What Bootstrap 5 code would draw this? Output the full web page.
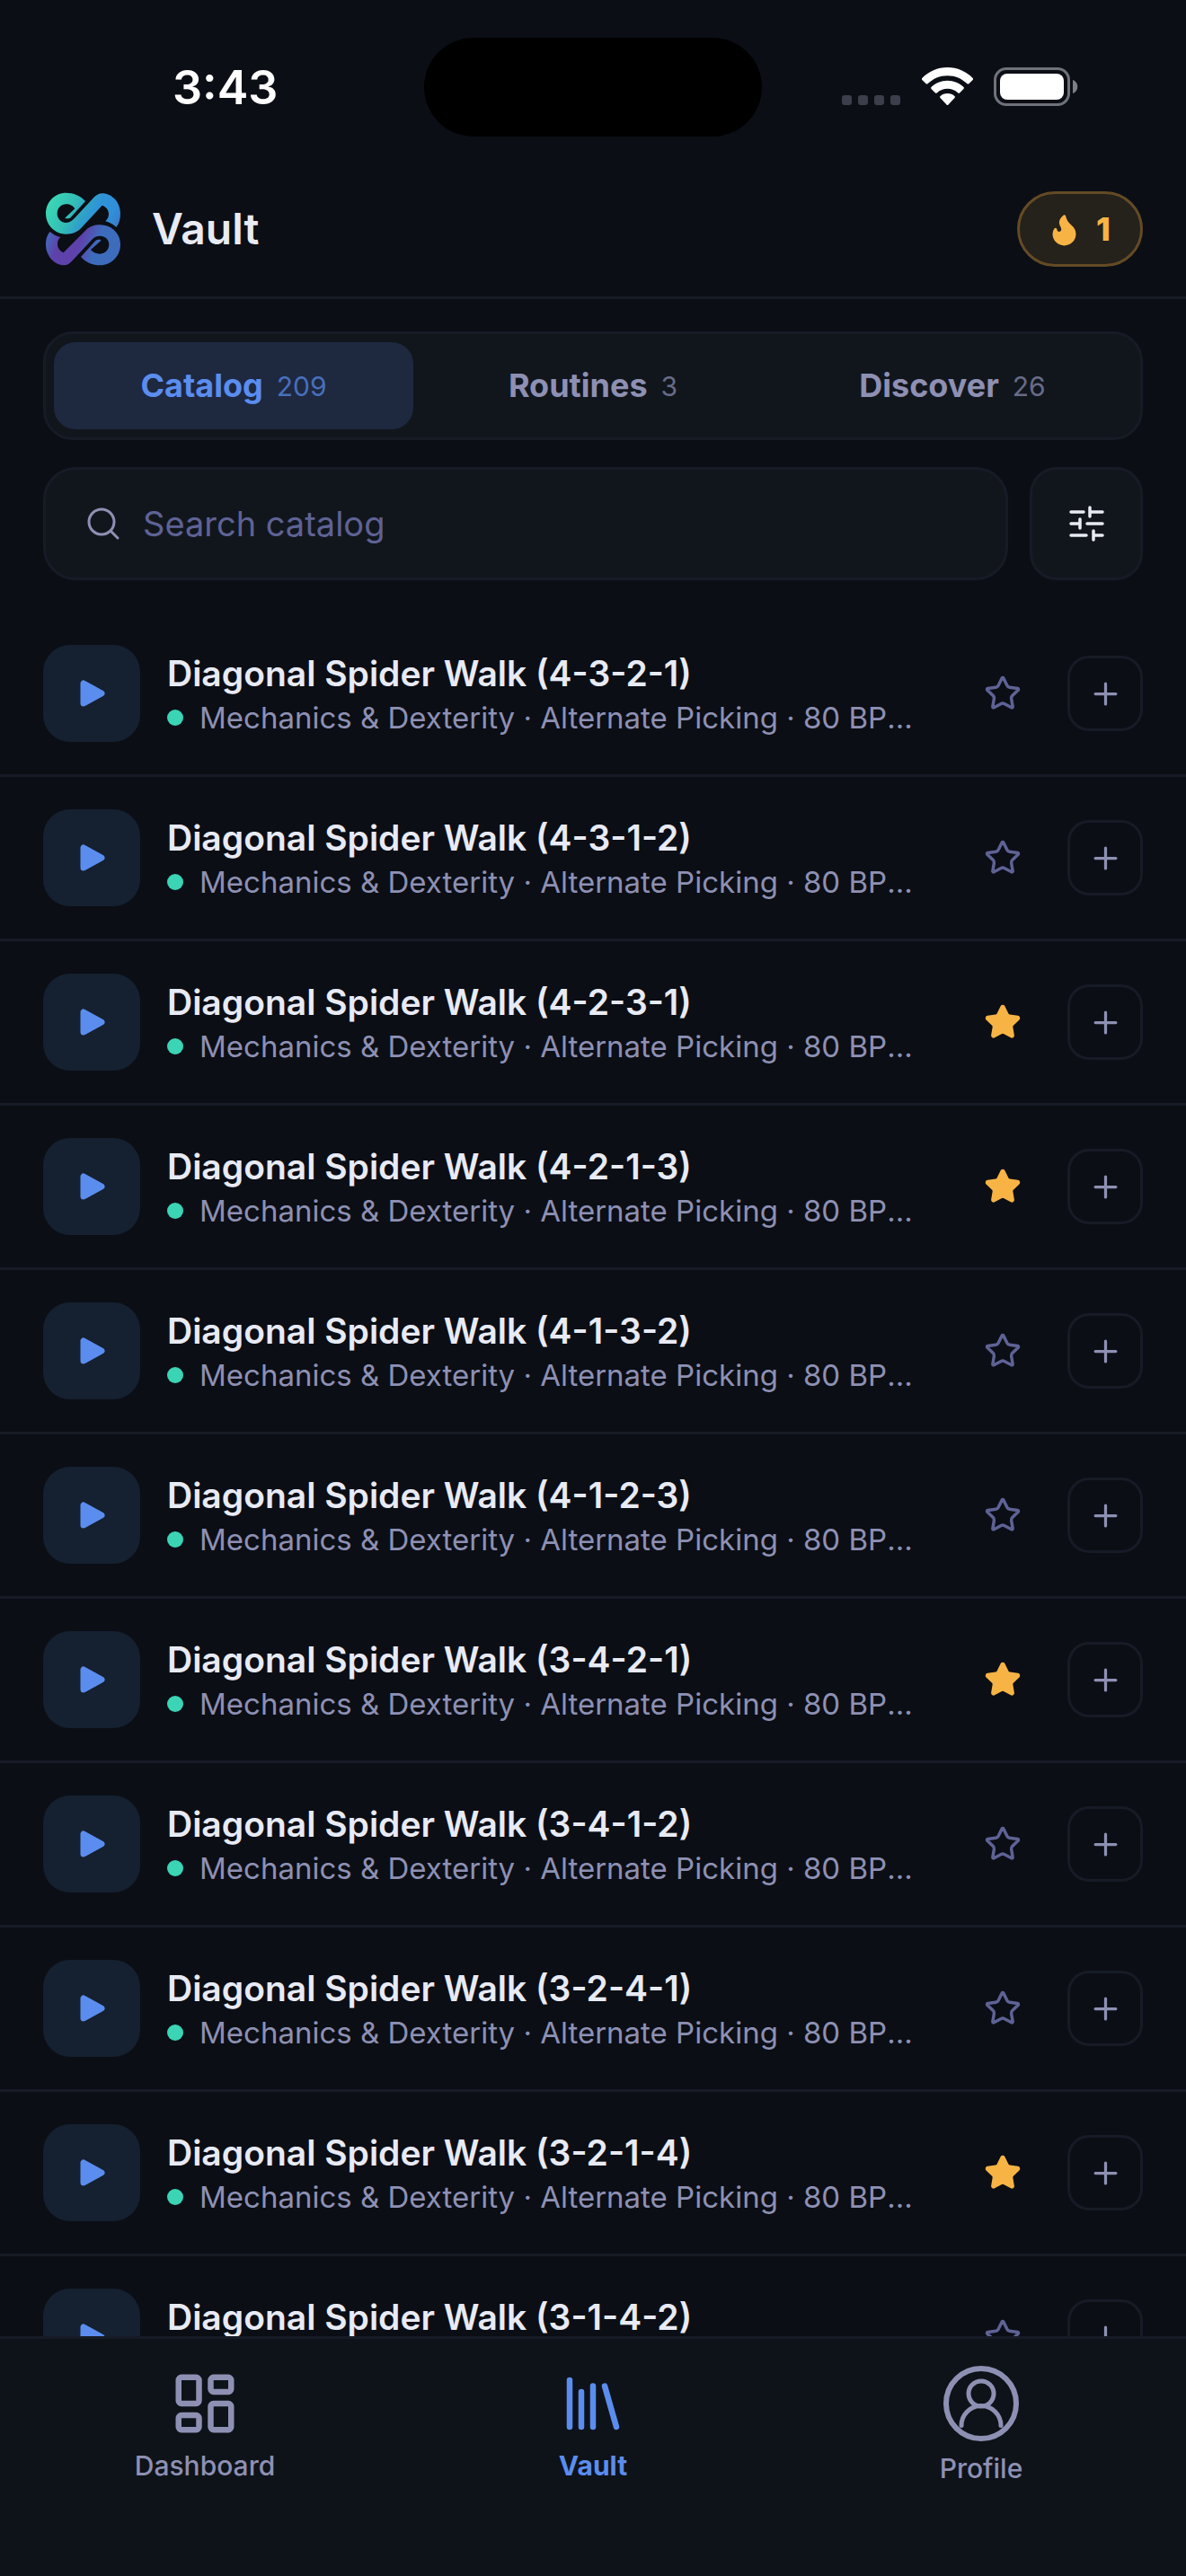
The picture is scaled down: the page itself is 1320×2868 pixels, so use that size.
<!DOCTYPE html>
<html lang="en">
<head>
<meta charset="utf-8">
<meta name="viewport" content="width=device-width, initial-scale=1">
<title>Vault</title>
<link href="https://cdn.jsdelivr.net/npm/bootstrap@5.3.0/dist/css/bootstrap.min.css" rel="stylesheet">
<style>
  :root { --ink:#e8eaf4; --muted:#8e90b3; --dim:#5f6294; --line:#171b26; --panel:#11161d; --accent:#5b8def; --gold:#f7b445; --mint:#3bd4b4; }
  body { background:#0b0e15; color:var(--ink); font-family:Inter,"Liberation Sans",sans-serif; line-height:1.2; }
  svg { display:block; flex:none; }
  .stroke-icon { fill:none; stroke:currentColor; stroke-linecap:round; stroke-linejoin:round; }
  .status-bar { height:180px; padding:0 120px 0 192px; }
  .clock { font-size:52px; font-weight:600; line-height:60px; color:#fff; margin-top:68px; }
  .island { width:376px; height:110px; border-radius:55px; background:#000; top:42px; left:50%; transform:translateX(-50%); }
  .status-icons { margin-top:75px; gap:23px; }
  .app-header { padding:33px 48px; border-bottom:3px solid var(--line); }
  .app-title { font-size:48px; font-weight:600; line-height:60px; }
  .streak { height:84px; padding:0 33px 0 30px; gap:16px; border:3px solid #644b25; border-radius:42px; background:#25211b; color:var(--gold); font-size:36px; font-weight:800; }
  .streak:hover { background:#2f2a20; color:var(--gold); }
  .tools { padding:36px 48px; gap:30px; }
  .segments { padding:9px; border:3px solid var(--line); border-radius:33px; background:var(--panel); }
  .segments .nav-link { height:97px; padding:0; gap:15px; border-radius:24px; color:var(--muted); font-size:36px; font-weight:700; }
  .segments .nav-link.active { background:#1e283f; color:var(--accent); }
  .segments .tally { font-size:30px; font-weight:400; opacity:.7; }
  .search-box { height:126px; padding:0 45px; gap:24px; border:3px solid var(--line); border-radius:36px; background:var(--panel); color:var(--muted); }
  .search-box input { font-size:38px; line-height:48px; color:var(--ink); }
  .search-box input::placeholder { color:var(--dim); opacity:1; }
  .filter-btn { width:126px; height:126px; border:3px solid var(--line); border-radius:30px; background:var(--panel); color:var(--ink); }
  .catalog { overflow-y:auto; min-height:0; scrollbar-width:none; }
  .catalog::-webkit-scrollbar { display:none; }
  .exercise { padding:36px 48px; border-bottom:3px solid var(--line); gap:30px; }
  .play-btn { width:108px; height:108px; border-radius:30px; background:#152030; color:var(--accent); }
  .exercise-text { padding-top:6px; }
  .exercise-name { font-size:39px; font-weight:600; line-height:48px; }
  .exercise-meta { gap:18px; font-size:33px; line-height:50px; color:var(--muted); }
  .level-dot { width:18px; height:18px; border-radius:50%; background:var(--mint); flex:none; }
  .star-btn { width:84px; height:84px; color:var(--dim); }
  .star-btn[aria-pressed="true"] { color:var(--gold); }
  .star-btn[aria-pressed="true"] svg { fill:currentColor; }
  .add-btn { width:84px; height:84px; border:3px solid var(--line); border-radius:24px; color:var(--muted); }
  .tab-bar { height:267px; padding:30px 12px 0; border-top:3px solid var(--line); background:#0e1319; }
  .tab-bar a { gap:12px; color:var(--muted); font-size:30px; font-weight:500; line-height:36px; text-decoration:none; }
  .tab-bar a.active { color:var(--accent); font-weight:700; }
  .tab-bar .short-icon { margin-top:3px; }
</style>
</head>
<body>
<svg width="0" height="0" class="position-absolute" aria-hidden="true">
  <symbol id="play" viewBox="0 0 42 42"><path d="M12 10v22l20-11z" fill="currentColor" stroke="currentColor" stroke-width="7" stroke-linejoin="round"/></symbol>
  <symbol id="star" viewBox="0 0 24 24"><path d="M11.525 2.295a.53.53 0 0 1 .95 0l2.31 4.679a2.123 2.123 0 0 0 1.595 1.16l5.166.756a.53.53 0 0 1 .294.904l-3.736 3.638a2.123 2.123 0 0 0-.611 1.878l.882 5.14a.53.53 0 0 1-.771.56l-4.618-2.428a2.122 2.122 0 0 0-1.973 0L6.396 21.01a.53.53 0 0 1-.77-.56l.881-5.139a2.122 2.122 0 0 0-.611-1.879L2.16 9.795a.53.53 0 0 1 .294-.906l5.165-.755a2.122 2.122 0 0 0 1.597-1.16z"/></symbol>
  <symbol id="plus" viewBox="0 0 24 24"><path d="M5 12h14M12 5v14"/></symbol>
</svg>
<div class="d-flex flex-column vh-100">
  <div class="status-bar position-relative d-flex justify-content-between align-items-start flex-shrink-0">
    <span class="clock">3:43</span>
    <div class="island position-absolute"></div>
    <div class="status-icons d-flex">
      <svg width="66" height="43" viewBox="0 0 66 43" fill="#3d3e4c"><rect y="31" width="11" height="11" rx="3"/><rect x="18" y="31" width="11" height="11" rx="3"/><rect x="36" y="31" width="11" height="11" rx="3"/><rect x="54" y="31" width="11" height="11" rx="3"/></svg>
      <svg width="57" height="43" viewBox="0 0 57 43" fill="#fff"><path d="M28.500 0C39.500 0 49.500 4.500 56.700 12Q57.500 13 56.700 14L52.300 18.300Q51.300 19 50.300 18.100C44.500 12.500 37 9.200 28.500 9.200S12.500 12.500 6.700 18.100Q5.700 19 4.700 18.300L.3 14Q-.5 13 .3 12C7.500 4.500 17.500 0 28.500 0Z"/><path d="M28.500 14.700C35.500 14.700 42 17.500 46.600 22.100Q47.300 23 46.500 24L42 28.500Q41 29.200 40 28.300C37 25.400 33 23.800 28.500 23.800S20 25.400 17 28.300Q16 29.200 15 28.500L10.500 24Q9.700 23 10.400 22.100C15 17.500 21.500 14.700 28.500 14.700Z"/><path d="M28.500 29C31.700 29 34.500 30.200 36.600 32.200Q37.400 33 36.500 34L29.500 41.500Q28.500 42.500 27.500 41.500L20.500 34Q19.600 33 20.400 32.200C22.500 30.200 25.300 29 28.500 29Z"/></svg>
      <svg width="94" height="43" viewBox="0 0 94 43"><rect x="1.500" y="1.500" width="82" height="40" rx="12.500" fill="none" stroke="#70727b" stroke-width="3"/><rect x="7" y="7" width="71" height="29" rx="8" fill="#fff"/><path d="M88 14c7 2 7 13 0 15z" fill="#7c7e88"/></svg>
    </div>
  </div>

  <header class="app-header d-flex align-items-center justify-content-between flex-shrink-0">
    <div class="d-flex align-items-center">
      <svg class="me-4" width="97" height="84" viewBox="24 37 291 252" role="img" aria-label="Logo">
        <defs>
          <linearGradient id="upper" gradientUnits="userSpaceOnUse" x1="60" y1="50" x2="275" y2="150"><stop offset="0" stop-color="#3bd6b5"/><stop offset=".3" stop-color="#33bdb6"/><stop offset=".5" stop-color="#2fa0c9"/><stop offset=".65" stop-color="#2f92d9"/><stop offset=".85" stop-color="#308fd8"/><stop offset="1" stop-color="#3a7bcb"/></linearGradient>
          <linearGradient id="lower" gradientUnits="userSpaceOnUse" x1="40" y1="190" x2="265" y2="270"><stop offset="0" stop-color="#4764bb"/><stop offset=".17" stop-color="#5e41aa"/><stop offset=".45" stop-color="#5e42ab"/><stop offset=".68" stop-color="#3d6cbd"/><stop offset="1" stop-color="#3d6cbd"/></linearGradient>
        </defs>
        <path fill="url(#upper)" d="M165 70C150 52 125 42 101 42C62 42 33 73 33 111C33 149 63 180 101 180C122 180 138 173 150 161L221 84C234 88 243 99 243 113C243 123 239 131 232 137C245 140 257 147 268 157C277 146 282 131 282 111C282 72 252 44 222 44C210 44 202 49 195 56L128 128C121 136 112 142 101 142C84 142 71 128 71 111C71 94 84 80 101 80C114 80 125 86 130 95L99 124C96 127 98 128 102 128H108Q113 128 117 123Z"/>
        <path fill="url(#lower)" d="M150 256C165 274 190 284 214 284C253 284 282 253 282 215C282 177 252 149 214 149C193 149 178 155 165 168L92 242C80 236 72 226 72 213C72 203 76 196 82 190C70 188 58 182 47 172C38 182 33 195 33 215C33 254 63 284 93 284C105 284 113 278 120 270L187 198C194 190 203 186 214 186C231 186 244 198 244 215C244 232 231 246 214 246C201 246 190 241 183 232L216 203C218 200 217 198 213 198H207Q202 198 198 203Z"/>
      </svg>
      <h1 class="app-title mb-0">Vault</h1>
    </div>
    <button type="button" class="streak btn d-flex align-items-center" aria-label="Streak: 1 day">
      <svg width="39" height="39" viewBox="0 0 24 24" fill="currentColor" stroke="currentColor" stroke-width="2" stroke-linejoin="round"><path d="M8.500 14.500A2.500 2.500 0 0 0 11 12c0-1.380-.5-2-1-3-1.072-2.143-.224-4.054 2-6 .5 2.500 2 4.900 4 6.500 2 1.600 3 3.500 3 5.500a7 7 0 1 1-14 0c0-1.153.433-2.294 1-3a2.500 2.500 0 0 0 2.500 2.500z"/></svg>
      <span>1</span>
    </button>
  </header>

  <section class="tools d-flex flex-column flex-shrink-0">
    <ul class="segments nav nav-pills nav-fill flex-nowrap" role="tablist">
      <li class="nav-item w-100" role="presentation"><button type="button" role="tab" aria-selected="true" class="nav-link active w-100 d-flex align-items-center justify-content-center">Catalog <span class="tally">209</span></button></li>
      <li class="nav-item w-100" role="presentation"><button type="button" role="tab" aria-selected="false" class="nav-link w-100 d-flex align-items-center justify-content-center">Routines <span class="tally">3</span></button></li>
      <li class="nav-item w-100" role="presentation"><button type="button" role="tab" aria-selected="false" class="nav-link w-100 d-flex align-items-center justify-content-center">Discover <span class="tally">26</span></button></li>
    </ul>
    <div class="d-flex gap-4">
      <label class="search-box d-flex align-items-center flex-grow-1" for="search">
        <svg class="stroke-icon" width="39" height="39" viewBox="0 0 39 39" stroke-width="3"><circle cx="17" cy="17" r="14"/><path d="M27 27l8 8"/></svg>
        <input id="search" type="search" class="flex-grow-1 bg-transparent border-0 p-0" placeholder="Search catalog" aria-label="Search catalog">
      </label>
      <button type="button" class="filter-btn btn p-0 d-flex align-items-center justify-content-center" aria-label="Filters">
        <svg class="stroke-icon" width="42" height="42" viewBox="0 0 42 42" stroke-width="3.500"><path d="M4 8h14M25 3v10M25 8h14M4 21h10M14 16v10M22 21h17M4 34h17M29 29v10M29 34h10"/></svg>
      </button>
    </div>
  </section>

  <main class="catalog flex-grow-1">
    <ul class="list-unstyled mb-0" id="exercises"></ul>
  </main>

  <nav class="tab-bar d-flex flex-shrink-0 align-items-start" aria-label="Main">
    <a href="#dashboard" class="col d-flex flex-column align-items-center">
      <svg class="stroke-icon short-icon" width="78" height="78" viewBox="0 0 24 24" stroke-width="2"><rect x="3" y="3" width="7" height="9" rx="1"/><rect x="14" y="3" width="7" height="5" rx="1"/><rect x="14" y="12" width="7" height="9" rx="1"/><rect x="3" y="16" width="7" height="5" rx="1"/></svg>
      Dashboard
    </a>
    <a href="#vault" class="active col d-flex flex-column align-items-center" aria-current="page">
      <svg class="stroke-icon short-icon" width="78" height="78" viewBox="0 0 24 24" stroke-width="2"><path d="M16 6l4 14M12 6v14M8 8v12M4 4v16"/></svg>
      Vault
    </a>
    <a href="#profile" class="col d-flex flex-column align-items-center">
      <svg class="stroke-icon" width="84" height="84" viewBox="0 0 84 84"><circle cx="42" cy="42" r="39" stroke-width="6"/><g stroke-width="5"><circle cx="42" cy="31" r="14"/><path d="M20 66.500a22 22 0 0 1 44 0"/></g></svg>
      Profile
    </a>
  </nav>
</div>

<script src="https://cdn.jsdelivr.net/npm/bootstrap@5.3.0/dist/js/bootstrap.bundle.min.js"></script>
<script>
  // Catalog entries: finger pattern and whether it is starred
  const exercises = [
    ["4-3-2-1", false], ["4-3-1-2", false], ["4-2-3-1", true], ["4-2-1-3", true],
    ["4-1-3-2", false], ["4-1-2-3", false], ["3-4-2-1", true], ["3-4-1-2", false],
    ["3-2-4-1", false], ["3-2-1-4", true], ["3-1-4-2", false]
  ];
  document.getElementById("exercises").innerHTML = exercises.map(([pattern, starred]) => `
    <li class="exercise d-flex align-items-center">
      <button type="button" class="play-btn btn border-0 p-0 d-flex align-items-center justify-content-center flex-shrink-0" aria-label="Play ${pattern}"><svg width="42" height="42"><use href="#play"/></svg></button>
      <div class="exercise-text flex-grow-1 overflow-hidden">
        <div class="exercise-name text-truncate">Diagonal Spider Walk (${pattern})</div>
        <div class="exercise-meta d-flex align-items-center"><span class="level-dot"></span><span class="text-truncate">Mechanics &amp; Dexterity · Alternate Picking · 80 BPM · Level 1</span></div>
      </div>
      <button type="button" class="star-btn btn border-0 p-0 d-flex align-items-center justify-content-center flex-shrink-0" aria-label="Star ${pattern}" aria-pressed="${starred}"><svg class="stroke-icon" width="42" height="42" stroke-width="2"><use href="#star"/></svg></button>
      <button type="button" class="add-btn btn p-0 d-flex align-items-center justify-content-center flex-shrink-0" aria-label="Add ${pattern}"><svg class="stroke-icon" width="39" height="39" stroke-width="2"><use href="#plus"/></svg></button>
    </li>`).join("");
</script>
</body>
</html>
